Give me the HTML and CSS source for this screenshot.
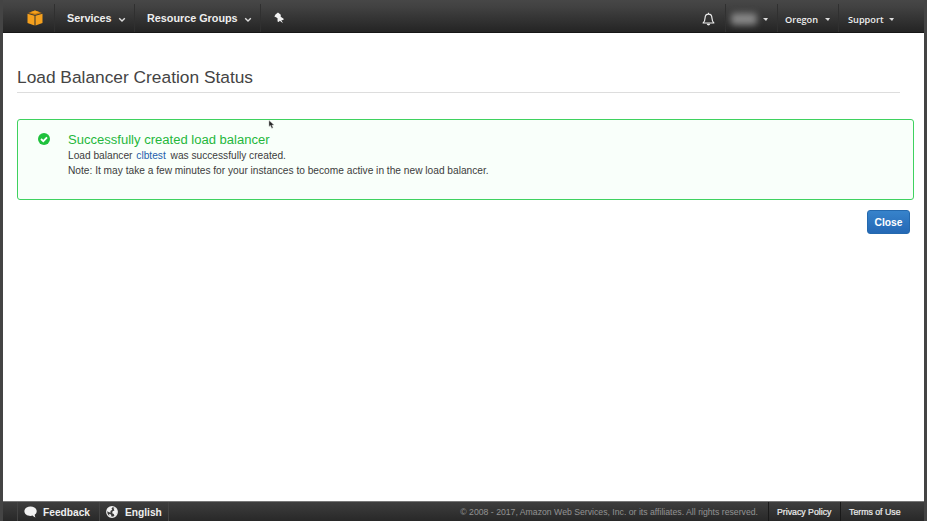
FILE: index.html
```html
<!DOCTYPE html>
<html lang="en">
<head>
<meta charset="utf-8">
<title>Load Balancer Creation Status</title>
<link rel="stylesheet" href="styles.css">
</head>
<body>
<div class="window">
  <header class="topbar">
    <a class="logo"><svg width="16" height="16" viewBox="0 0 16 16"><path fill="#c97a0c" d="M1 3 8 .6 15 3 8 5z"/><path fill="#f5a01d" d="M.5 3.800 7.500 5.700V15.400L.5 13zM15.500 3.800 8.500 5.700V15.400L15.500 13z"/><path fill="#f5a01d" d="M3.200 2.200 8 .5l4.800 1.700L8 3.700z"/></svg></a>
    <a class="nav services"><span>Services</span><svg width="8" height="6" viewBox="0 0 8 6"><path d="M1.200 1.200 4 4l2.800-2.800" fill="none" stroke="#ddd" stroke-width="1.400"/></svg></a>
    <a class="nav groups"><span>Resource Groups</span><svg width="8" height="6" viewBox="0 0 8 6"><path d="M1.200 1.200 4 4l2.800-2.800" fill="none" stroke="#ddd" stroke-width="1.400"/></svg></a>
    <a class="pin"><svg width="11" height="12" viewBox="0 0 10 11"><path fill="#f2f2f2" d="M3.600.4 6.200 2.500 6.100 4.300 8.800 6.300 8.600 7.400 6.700 7.500 8.200 10.200 5.300 8 4.300 9.200 3.200 8.800 3.200 5.700 1.800 4.900.3 4.200 1.300 2.400z"/></svg></a>
    <span class="spacer"></span>
    <a class="bell"><svg width="13" height="14" viewBox="0 0 12 13"><path d="M1 10.200c1.500-1.200 1.700-2.400 1.800-4.700C2.900 3.200 4.100 2 6 2s3.100 1.200 3.200 3.500c.1 2.300.3 3.500 1.800 4.700zM6 2V.6" fill="none" stroke="#eee" stroke-width="1.100" stroke-linejoin="round"/><path d="M4.300 11h3.400Q7.400 12.600 6 12.600T4.300 11" fill="#eee"/></svg></a>
    <a class="menu account"><span class="redacted"></span><i class="caret"></i></a>
    <a class="menu region"><span>Oregon</span><i class="caret"></i></a>
    <a class="menu support"><span>Support</span><i class="caret"></i></a>
  </header>
  <main>
    <h1><span>Load Balancer Creation Status</span></h1>
    <section class="notice">
      <svg class="check" width="12" height="12" viewBox="0 0 12 12"><circle cx="6" cy="6" r="6" fill="#1fc13c"/><path d="M3 6l2.300 2.200L9 4.300" fill="none" stroke="#fff" stroke-width="1.800"/></svg>
      <div class="message">
        <h2><span>Successfully created load balancer</span></h2>
        <p class="created">Load balancer <a>clbtest</a> was successfully created.</p>
        <p class="note"><span>Note: It may take a few minutes for your instances to become active in the new load balancer.</span></p>
      </div>
    </section>
    <div class="actions"><button>Close</button></div>
  </main>
  <footer>
    <a class="foot feedback"><svg width="13" height="12" viewBox="0 0 13 12"><path fill="#f2f2f2" d="M6.500.5C3 .5.400 2.500.400 5.200S3 9.900 6.500 9.900c.8 0 1.500-.1 2.100-.3.800 1 1.800 1.600 3 1.800-.7-.8-.9-1.600-.8-2.800 1.200-.9 1.900-2 1.900-3.400C12.700 2.500 10 .5 6.500.5z"/></svg><span>Feedback</span></a>
    <a class="foot english"><svg width="12" height="12" viewBox="0 0 12 12"><circle cx="6" cy="6" r="5.300" fill="#3a3a3a" stroke="#eee" stroke-width="1.200"/><path fill="#f2f2f2" d="M1 3.500 3.500.9 6.500 1 5.500 2.700 6.300 3.800 4.300 5 4.800 6.600 3 6.300 1 5zM7.500 2.300 9.500 2 11.300 5 10.500 8.500 8.700 10.600 7.800 8 6.200 7.200 6.600 5.300 8.400 4.500zM3 8 5 8.600 5.500 11 3.500 10.500z"/></svg><span>English</span></a>
    <span class="spacer"></span>
    <span class="copyright">© 2008 - 2017, Amazon Web Services, Inc. or its affiliates. All rights reserved.</span>
    <a class="legal privacy"><span>Privacy Policy</span></a>
    <a class="legal terms"><span>Terms of Use</span></a>
  </footer>
</div>
<svg class="cursor" width="7" height="9" viewBox="0 0 7 9"><path d="M1 .5v6l1.400-1.200L3.800 8.300 5 7.700 3.800 5H6z" fill="#222" stroke="#bbb" stroke-width=".5"/></svg>
</body>
</html>
```
FILE: styles.css
```css
* { box-sizing: border-box; }
body {
  margin: 0;
  height: 521px;
  overflow: hidden;
  padding: 0 3px;
  background: #444;
  font-family: "Liberation Sans", Arial, sans-serif;
  color: #444;
}
.window { height: 521px; display: flex; flex-direction: column; background: #fff; }
.topbar {
  height: 33px;
  display: flex;
  align-items: stretch;
  padding-top: 4px;
  background: linear-gradient(#474747, #424242 20%, #242424);
  border-bottom: 1px solid #161616;
  color: #eee;
}
.topbar a { display: flex; align-items: center; white-space: nowrap; }
.topbar .logo { width: 52px; padding-left: 24px; border-right: 1px solid #303030; }
.topbar .nav { font-size: 10.800px; font-weight: bold; justify-content: space-between; padding-right: 8px; border-right: 1px solid #303030; }
.nav svg { margin-top: 3px; }
.services { width: 80px; padding-left: 12px; }
.groups { width: 126px; padding-left: 12px; }
.pin { padding-left: 13px; }
.spacer { flex: 1; }
.bell { width: 23px; padding-top: 1px; }
.topbar .menu { font-family: "Open Sans", "Noto Sans", sans-serif; font-size: 9.200px; font-weight: 600; justify-content: space-between; border-left: 1px solid #303030; padding-top: 2px; }
.caret { width: 0; height: 0; border-left: 2.500px solid transparent; border-right: 2.500px solid transparent; border-top: 3px solid #ddd; }
.menu .caret { border-left-width: 3px; border-right-width: 2px; }
.account { width: 52px; padding-left: 5px; padding-right: 9px; }
.redacted { width: 26px; height: 12px; border-radius: 4px; background: #858585; filter: blur(3px); }
.region { width: 61px; padding-left: 7px; padding-right: 8px; }
.support { width: 86px; padding-left: 9px; padding-right: 30px; }
main { flex: 1; padding: 35px 10px 0 14px; }
h1 { margin: 0 14px 26px 0; height: 25px; line-height: 18px; font-size: 17.330px; font-weight: normal; border-bottom: 1px solid #ddd; color: #444; }
.notice { height: 81px; display: flex; border: 1px solid #3fd25f; border-radius: 3px; background: #f9fffa; padding: 13px 0 0 20px; }
.check { margin-right: 18px; }
.message { font-size: 10.190px; line-height: 15px; color: #3c3c3c; }
h2 { margin: -1px 0 1px; font-size: 13.050px; line-height: 15px; font-weight: normal; color: #25b73c; }
p { margin: 0; white-space: nowrap; }
.created a { color: #2360ac; margin: 0 2px 0 1px; }
.actions { display: flex; justify-content: flex-end; padding: 10px 4px 0 0; }
button { width: 43px; height: 24px; padding: 0; border: 1px solid #2469ae; border-radius: 3px; background: linear-gradient(#3783cb, #2468b5); color: #fff; font: bold 10.300px "Liberation Sans", Arial, sans-serif; }
footer { height: 20px; display: flex; background: linear-gradient(#3e3e3e, #282828); border-top: 1px solid #777; color: #eee; white-space: nowrap; }
.foot { display: flex; align-items: center; font-size: 10.200px; font-weight: bold; border-right: 1px solid #444; padding-top: 1px; }
.feedback { width: 83px; margin-left: 14px; padding-left: 6px; gap: 6px; border-left: 1px solid #444; }
.english { width: 69px; padding-left: 6px; gap: 7px; }
.copyright { font-size: 8.700px; line-height: 21px; color: #929292; margin-right: 10px; }
.legal { font-size: 8.750px; line-height: 21px; border-left: 1px solid #191919; padding-left: 8px; -webkit-text-stroke: .2px #eee; }
.privacy { width: 72px; }
.terms { width: 84px; }
.cursor { position: absolute; left: 268px; top: 120px; }
```
